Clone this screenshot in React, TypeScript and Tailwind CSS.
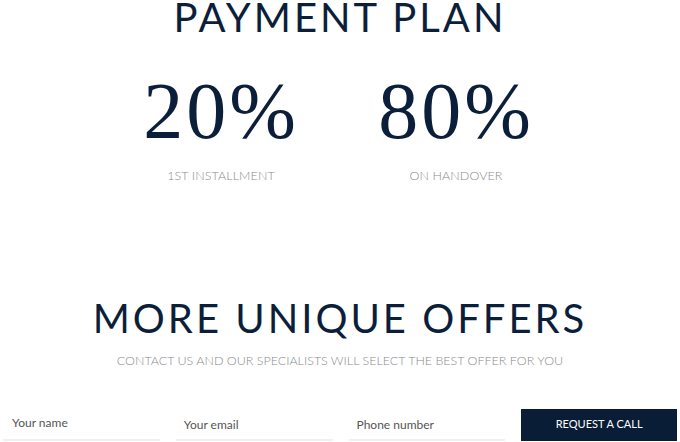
import React from "react";

export default function App() {
  const navy = "text-[#0c1f3a]";
  return (
    <div className="w-[680px] h-[442px] overflow-hidden bg-white font-['Lato',sans-serif]">
      <h1 className={`text-center text-[40px] leading-[34px] tracking-[3px] ${navy}`}>PAYMENT PLAN</h1>
      <div className="flex justify-center mt-[37px] gap-0 ml-[-3px]">
        <div className="w-[235px] flex flex-col items-center">
          <div className={`font-['Liberation_Serif',serif] text-[80px] leading-[80px] tracking-[3px] ${navy}`}>20%</div>
          <div className="mt-[16px] text-[12.5px] font-light text-[#8a8a8a] tracking-[0.1px]">1ST INSTALLMENT</div>
        </div>
        <div className="w-[235px] flex flex-col items-center">
          <div className={`font-['Liberation_Serif',serif] text-[80px] leading-[80px] tracking-[3px] ${navy}`}>80%</div>
          <div className="mt-[16px] text-[12.5px] font-light text-[#8a8a8a] tracking-[0.1px]">ON HANDOVER</div>
        </div>
      </div>
      <h2 className={`text-center text-[40px] leading-[40px] tracking-[3px] ${navy} mt-[112px]`}>MORE UNIQUE OFFERS</h2>
      <p className="text-center mt-[14px] text-[12.5px] font-light text-[#8a8a8a]">CONTACT US AND OUR SPECIALISTS WILL SELECT THE BEST OFFER FOR YOU</p>
      <div className="flex items-end mt-[38px] px-[3px] gap-[16px]">
        <div className="w-[157px] border-b-2 border-[#f0f0f0] pb-[7px] pl-[9px] text-[12px] leading-[18px] text-[#555]">Your name</div>
        <div className="w-[157px] border-b-2 border-[#f0f0f0] pb-[5px] pl-[8px] text-[12px] leading-[18px] text-[#555]">Your email</div>
        <div className="w-[157px] border-b-2 border-[#f0f0f0] pb-[5px] pl-[8px] text-[12px] leading-[18px] text-[#555]">Phone number</div>
        <button className="w-[156px] h-[32px] bg-[#0a1d37] text-white text-[11px]">REQUEST A CALL</button>
      </div>
    </div>
  );
}
